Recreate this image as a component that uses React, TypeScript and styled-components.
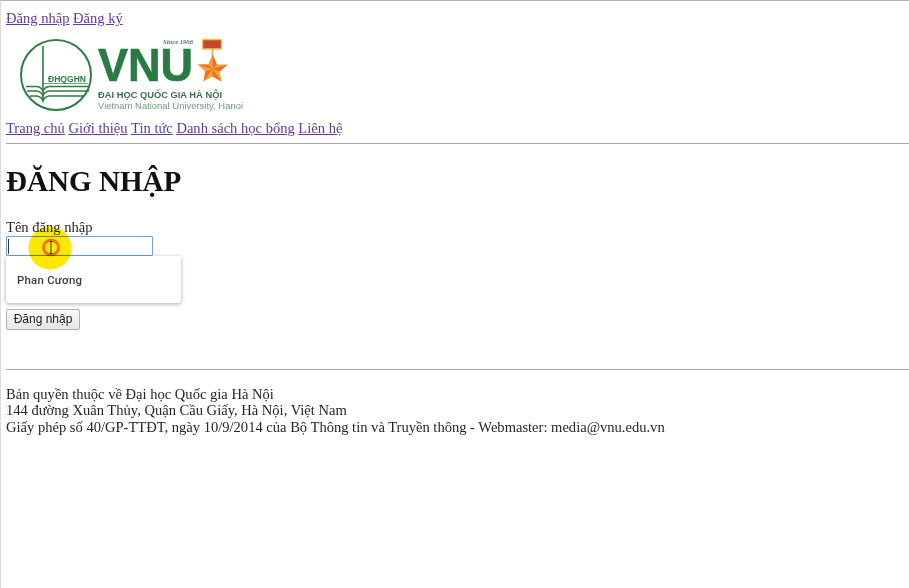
import React from "react";
import styled, { createGlobalStyle } from "styled-components";

const Global = createGlobalStyle`
  html, body { margin: 0; padding: 0; background: #fff; }
  body { font-family: "Liberation Serif", "Times New Roman", serif; font-size: 14.56px; line-height: 16.6px; color: #262626; }
`;
const Page = styled.div`
  position: relative; width: 909px; height: 588px; box-sizing: border-box; overflow: hidden;
  border-top: 1px solid #b5b5b5; border-left: 1px solid #dcdcdc; padding: 9px 0 0 5px;
  filter: blur(0.4px);
`;
const LinkRow = styled.nav`display: flex; gap: 3.6px;`;
const TextLink = styled.a`color: #5f3a96; text-decoration: underline;`;
const Logo = styled.svg`display: block; margin: 11px 0 5px 14px; width: 224px; height: 77px;`;
const Rule = styled.hr<{ $top: number; $bottom: number }>`
  border: 0; height: 1px; background: #a8a8a8; margin: ${p => p.$top}px 0 ${p => p.$bottom}px 0;
`;
const Title = styled.h1`font-size: 29.1px; line-height: 34px; font-weight: bold; color: #111; margin: 20px 0 21px;`;
const Form = styled.form`display: block; position: relative;`;
const Label = styled.label`display: block;`;
const Field = styled.input`
  display: block; box-sizing: border-box; width: 147px; height: 20px; margin: 0; padding: 0 2px;
  border: 1px solid #7a9fdc; border-radius: 1px; outline: 0; background: #fff;
`;
const Caret = styled.span`
  position: absolute; left: 2px; top: 20px; width: 1px; height: 15px; background: #333;
`;
const Suggestions = styled.div`
  position: absolute; left: 0; top: 37px; width: 175px; height: 47px; box-sizing: border-box;
  background: #fff; border-radius: 3px; box-shadow: 0 1px 4px rgba(0,0,0,.35);
  padding: 16px 11px; font: 500 11.4px/16px Roboto, "Noto Sans", sans-serif; color: #3c3c3c; letter-spacing: .25px;
`;
const Submit = styled.button`
  display: block; box-sizing: border-box; width: 74px; height: 21px; margin: 53px 0 0; padding: 0;
  border: 1px solid #b0b0b0; border-radius: 2px; background: linear-gradient(#fafafa, #e6e6e6);
  font: 12px "Liberation Sans", Arial, sans-serif; color: #222;
`;
const Footer = styled.footer`display: block;`;
const FooterLine = styled.div``;
const Pointer = styled.svg`
  position: absolute; left: 27px; top: 225px; width: 44px; height: 44px;
  pointer-events: none; mix-blend-mode: multiply;
`;

export default function App() {
  return (
    <>
      <Global />
      <Page>
        <LinkRow>
          <TextLink href="#">Đăng nhập</TextLink>
          <TextLink href="#">Đăng ký</TextLink>
        </LinkRow>
        <Logo viewBox="0 0 224 77">
          <g fill="none" stroke="#2f7d46">
            <circle cx="36" cy="37" r="35" strokeWidth="2" />
            <path d="M23 8V63" strokeWidth="1.6" />
            <path d="M23 45.500H68" strokeWidth="0.7" />
            <path d="M6 48.500H17C20 49 22 51 23 53C24 51 26 49 29 48.500H70M7 53H17C20 53.500 22 55 23 58C24 55 26 53.500 29 53H69M10 58H17C20 58.500 22 60 23 63C24 60 26 58.500 29 58H64" strokeWidth="1.5" />
          </g>
          <text x="28" y="44" fontFamily="Liberation Sans" fontWeight="700" fontSize="9.500" fill="#2f7d46" textLength="38" lengthAdjust="spacingAndGlyphs">ĐHQGHN</text>
          <text x="78" y="43" fontFamily="Liberation Sans" fontWeight="700" fontSize="46" fill="#2a7a44" stroke="#2a7a44" strokeWidth="0.7" textLength="95" lengthAdjust="spacingAndGlyphs">VNU</text>
          <text x="143" y="6" fontFamily="Liberation Serif" fontStyle="italic" fontWeight="700" fontSize="6.500" fill="#3f8458" textLength="30" lengthAdjust="spacingAndGlyphs">Since 1906</text>
          <text x="78" y="59.500" fontFamily="Liberation Sans" fontWeight="700" fontSize="9.500" fill="#3d6e4c" textLength="124" lengthAdjust="spacingAndGlyphs">ĐẠI HỌC QUỐC GIA HÀ NỘI</text>
          <text x="78" y="70.500" fontFamily="Liberation Sans" fontSize="9" fill="#6f9e7e" textLength="145" lengthAdjust="spacingAndGlyphs">Vietnam National University, Hanoi</text>
          <rect x="182.500" y="1.500" width="19" height="9.500" fill="#c8452b" stroke="#efc35a" strokeWidth="1.5" />
          <path d="M192.500 11V17" stroke="#efb04a" strokeWidth="2" />
          <path d="M192.500 16L196.800 26.500H207.500L199.700 33.500L201.500 43.500L192.500 38.500L183.500 43.500L185.300 33.500L177.500 26.500H188.200Z" fill="#f9a436" />
          <path d="M192.500 16L196.800 26.500L192.500 31ZM207.500 26.500L192.500 31L199.700 33.500ZM201.500 43.500L192.500 31V38.500ZM183.500 43.500L192.500 31L185.300 33.500ZM177.500 26.500L192.500 31L188.200 26.500Z" fill="#e9702a" />
        </Logo>
        <LinkRow>
          <TextLink href="#">Trang chủ</TextLink>
          <TextLink href="#">Giới thiệu</TextLink>
          <TextLink href="#">Tin tức</TextLink>
          <TextLink href="#">Danh sách học bổng</TextLink>
          <TextLink href="#">Liên hệ</TextLink>
        </LinkRow>
        <Rule $top={7} $bottom={0} />
        <Title>ĐĂNG NHẬP</Title>
        <Form>
          <Label>Tên đăng nhập</Label>
          <Field />
          <Caret />
          <Suggestions>Phan Cương</Suggestions>
          <Submit type="button">Đăng nhập</Submit>
        </Form>
        <Rule $top={39} $bottom={16} />
        <Footer>
          <FooterLine>Bản quyền thuộc về Đại học Quốc gia Hà Nội</FooterLine>
          <FooterLine>144 đường Xuân Thủy, Quận Cầu Giấy, Hà Nội, Việt Nam</FooterLine>
          <FooterLine>Giấy phép số 40/GP-TTĐT, ngày 10/9/2014 của Bộ Thông tin và Truyền thông - Webmaster: media@vnu.edu.vn</FooterLine>
        </Footer>
        <Pointer viewBox="0 0 44 44">
          <circle cx="22" cy="22" r="21.500" fill="#fbe800" />
          <circle cx="23" cy="21.500" r="7.500" fill="none" stroke="#f0760c" strokeWidth="3" />
          <path d="M21.500 15.500H24.500M23 15.500V27.500M21.500 27.500H24.500" stroke="#333" strokeWidth="1" fill="none" />
        </Pointer>
      </Page>
    </>
  );
}
